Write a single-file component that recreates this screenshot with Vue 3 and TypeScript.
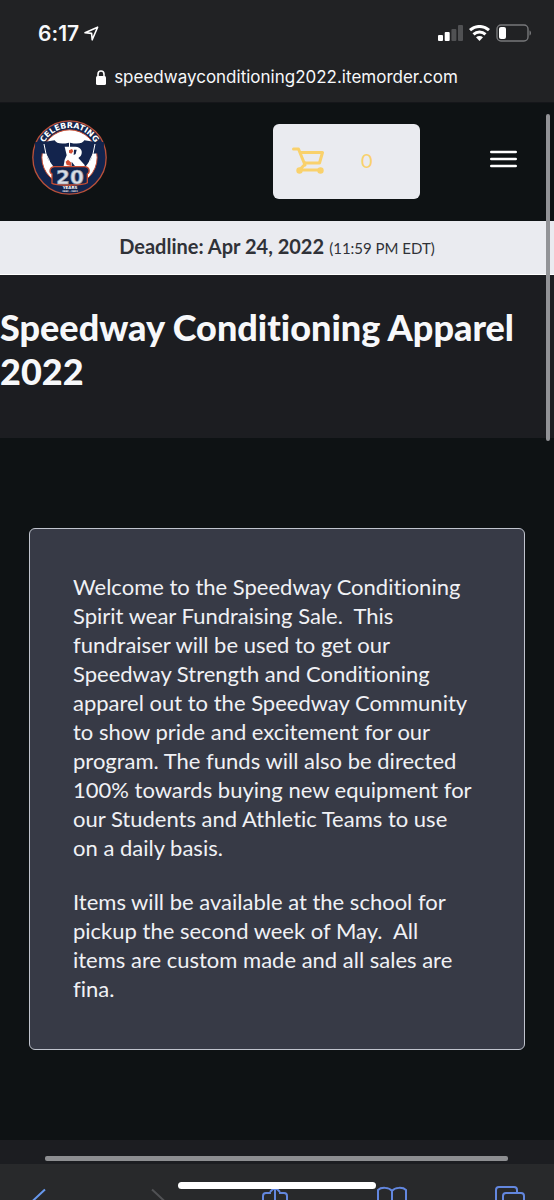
<script setup lang="ts">
import { ref } from 'vue'

const host = 'speedwayconditioning2022.itemorder.com'
const cartCount = ref<number>(0)
const welcome: string[] = [
  'Welcome to the Speedway Conditioning Spirit wear Fundraising Sale. \u00a0This fundraiser will be used to get our Speedway Strength and Conditioning apparel out to the Speedway Community to show pride and excitement for our program. The funds will also be directed 100% towards buying new equipment for our Students and Athletic Teams to use on a daily basis.',
  'Items will be available at the school for pickup the second week of May. \u00a0All items are custom made and all sales are fina.',
]
</script>

<template>
  <div class="screen">
    <div class="browser-top">
      <div class="status">
        <span class="time">6:17</span>
        <svg class="location" width="15" height="15" viewBox="0 0 15 15" aria-hidden="true">
          <path d="M1 6.8 13.6 1.2 8.2 13.8 7.6 7.4Z" />
        </svg>
        <svg class="signal" width="26" height="16" viewBox="0 0 26 16" aria-hidden="true">
          <rect x="0" y="10" width="5" height="6" rx="1" fill="#fff" />
          <rect x="6.7" y="7" width="5" height="9" rx="1" fill="#fff" />
          <rect x="13.4" y="4" width="5" height="12" rx="1" fill="#505153" />
          <rect x="20" y="0" width="5" height="16" rx="1" fill="#505153" />
        </svg>
        <svg class="wifi" width="21" height="16" viewBox="0 0 21 16" aria-hidden="true">
          <g fill="none" stroke="#fff" stroke-width="3">
            <path d="M1 5.2C6.5 .2 14.5 .2 20 5.2" />
            <path d="M4.5 9.4C8 6.2 13 6.2 16.5 9.4" />
          </g>
          <path d="M7 12.3C9 10.5 12 10.5 14 12.3L10.5 16Z" fill="#fff" />
        </svg>
        <svg class="battery" width="36" height="18" viewBox="0 0 36 18" aria-hidden="true">
          <rect x="1" y="1" width="31" height="16" rx="4" fill="none" stroke="#77787a" stroke-width="1.4" />
          <rect x="3" y="3" width="7" height="12" rx="2" fill="#fff" />
          <path d="M33.5 6.5C35.5 7 35.5 11 33.5 11.5Z" fill="#77787a" />
        </svg>
      </div>
      <div class="address">
        <svg width="10" height="15" viewBox="0 0 10 15" aria-hidden="true">
          <rect x="0" y="6" width="10" height="9" rx="1.5" fill="#fff" />
          <path d="M2 7V4.2C2 0 8 0 8 4.2V7" fill="none" stroke="#fff" stroke-width="1.6" />
        </svg>
        <span>{{ host }}</span>
      </div>
    </div>

    <header class="site-header">
      <a href="#" class="logo" aria-label="Store home">
        <svg width="75" height="75" viewBox="0 0 225 225">
          <defs>
            <path id="ring" d="M26 96A88 88 0 0 1 199 96" />
          </defs>
          <circle cx="112.5" cy="112.5" r="110" fill="#13244d" stroke="#b8503a" stroke-width="4" />
          <circle cx="112.5" cy="112.5" r="83" fill="#fff" stroke="#c84d32" stroke-width="3" />
          <path d="M9 66 30 67 68 61C72 70 88 74 111 68V175H66V142L48 118L43 101 10 98Z" fill="#13244d" />
          <path d="M216 66 195 67 157 61C153 70 137 74 114 68V175H159V142L177 118L182 101 215 98Z" fill="#13244d" />
          <path d="M36 72 42 102 52 122 58 150" fill="none" stroke="#fff" stroke-width="3" />
          <path d="M189 72 183 102 173 122 167 150" fill="none" stroke="#fff" stroke-width="3" />
          <path d="M98 80H130C148 80 154 96 146 108L139 114 158 135V145H134L119 125V143H94L98 119 104 106Z" fill="#fff" />
          <path d="M111 91 120 87 124 94 118 101 111 98ZM101 125 108 119 118 128 118 138 104 135Z" fill="#d34e34" />
          <path d="M126 89H134L131 102 125 105Z" fill="#13244d" />
          <path d="M67 140H158C173 140 175 157 166 162V188C154 197 73 197 60 190V162C50 157 53 140 67 140Z" fill="#13244d" stroke="#c84d32" stroke-width="4" />
          <text class="logo-arc"><textPath href="#ring" startOffset="50%" text-anchor="middle">CELEBRATING</textPath></text>
          <text class="logo-number" x="114" y="191" text-anchor="middle">20</text>
          <text class="logo-years" x="114" y="207" text-anchor="middle">YEARS</text>
          <text class="logo-dates" x="114" y="217" text-anchor="middle">2002 - 2022</text>
        </svg>
      </a>
      <button type="button" class="cart" :aria-label="`Cart, ${cartCount} items`">
        <svg width="33" height="27" viewBox="0 0 33 27" aria-hidden="true">
          <g fill="none" stroke="#f9d16c" stroke-width="3" stroke-linecap="round" stroke-linejoin="round">
            <path d="M1.5 2H6.5L13 18" />
            <path d="M8.5 5.5H30.5L27.5 16H12.5" />
            <path d="M13 16C12 20 9 20 8 23H28" />
          </g>
          <circle cx="7.5" cy="23.5" r="3.2" fill="#f9d16c" />
          <circle cx="28.5" cy="23.5" r="3.2" fill="#f9d16c" />
        </svg>
        <span>{{ cartCount }}</span>
      </button>
      <button type="button" class="menu" aria-label="Open menu">
        <svg width="27" height="18" viewBox="0 0 27 18" aria-hidden="true">
          <path d="M1.3 2H25.7M1.3 9H25.7M1.3 16H25.7" stroke="#fff" stroke-width="2.6" stroke-linecap="round" />
        </svg>
      </button>
    </header>

    <p class="deadline"><strong>Deadline: Apr 24, 2022</strong> <small>(11:59 PM EDT)</small></p>

    <section class="hero">
      <h1>Speedway Conditioning Apparel 2022</h1>
    </section>

    <main class="content">
      <article class="card">
        <p v-for="text in welcome" :key="text">{{ text }}</p>
      </article>
    </main>

    <div class="next-section"></div>

    <nav class="toolbar" aria-label="Browser">
      <button type="button" aria-label="Back">
        <svg width="30" height="30" viewBox="0 0 30 30"><path d="M21 3.5 7 16.5 21 29" stroke="#6798ed" /></svg>
      </button>
      <button type="button" aria-label="Forward">
        <svg width="30" height="30" viewBox="0 0 30 30"><path d="M10 3.5 24 16.5 10 29" stroke="#505154" /></svg>
      </button>
      <button type="button" aria-label="Share">
        <svg width="30" height="30" viewBox="0 0 30 30"><path d="M11 7H6Q3 7 3 10V28H27V10Q27 7 24 7H19M15 19V1M10 6 15 1 20 6" stroke="#6387df" /></svg>
      </button>
      <button type="button" aria-label="Bookmarks">
        <svg width="30" height="30" viewBox="0 0 30 30"><path d="M15 27V5C12 1 4 1 1 4V25C5 23 12 23 15 27C18 23 26 23 29 25V4C26 1 18 1 15 5" stroke="#6387df" /></svg>
      </button>
      <button type="button" aria-label="Tabs">
        <svg width="30" height="30" viewBox="0 0 30 30"><path d="M8 22H4Q1 22 1 19V4Q1 1 4 1H19Q22 1 22 4V7M11 7H26Q29 7 29 10V28H8V10Q8 7 11 7Z" stroke="#6387df" /></svg>
      </button>
    </nav>

    <div class="scroll-vertical"></div>
    <div class="scroll-horizontal"></div>
    <div class="home-indicator"></div>
  </div>
</template>

<style>
body {
  margin: 0;
  background: #0e1214;
}
</style>

<style scoped>
.screen {
  position: relative;
  display: flex;
  flex-direction: column;
  min-height: 100vh;
  overflow: hidden;
  background: #0e1214;
  color: #f7f8fa;
  font-family: Lato, "Open Sans", sans-serif;
  font-variant-ligatures: none;
}

.screen * {
  box-sizing: border-box;
}

svg {
  display: block;
  flex: none;
}

button {
  padding: 0;
  border: 0;
  background: none;
  color: inherit;
  font: inherit;
  cursor: pointer;
}

.browser-top {
  height: 103px;
  background: #212224;
  border-bottom: 1px solid #15161a;
  font-family: Inter, Roboto, sans-serif;
}

.status {
  display: flex;
  align-items: center;
  height: 66px;
  padding: 0 22px 0 38px;
}

.time {
  font-size: 21px;
  font-weight: 600;
}

.location {
  margin-left: 5px;
  fill: none;
  stroke: #fff;
  stroke-width: 1.6;
  stroke-linejoin: round;
}

.signal {
  margin-left: auto;
}

.wifi {
  margin: 0 6px 0 5px;
}

.address {
  display: flex;
  align-items: center;
  justify-content: center;
  gap: 8px;
  height: 22px;
  font-size: 17px;
}

.site-header {
  display: flex;
  align-items: center;
  gap: 70px;
  height: 118px;
  padding: 0 37px 10px 32px;
}

.cart {
  display: flex;
  align-items: center;
  gap: 36px;
  width: 147px;
  height: 75px;
  margin: 8px 0 0 auto;
  padding: 0 19px 2px;
  border-radius: 6px;
  background: #eaebf0;
  color: #f9d16c;
  font-size: 20px;
}

.menu {
  padding-top: 4px;
}

.logo-arc,
.logo-number,
.logo-years,
.logo-dates {
  fill: #fff;
  font-family: "DejaVu Sans", sans-serif;
  font-weight: 700;
}

.logo-arc {
  font-size: 24px;
}

.logo-number {
  fill: #d9dde5;
  stroke: #8e98ac;
  stroke-width: 2px;
  font-size: 60px;
}

.logo-years {
  font-size: 12px;
}

.logo-dates {
  font-size: 7px;
}

.deadline {
  height: 54px;
  margin: 0;
  border-bottom: 1px solid #fff;
  background: #eaebf0;
  color: #303238;
  font-size: 20px;
  line-height: 51px;
  text-align: center;
}

.deadline small {
  font-size: 15px;
}

.hero {
  height: 163px;
  padding-top: 30px;
  background: #1c1d21;
}

h1 {
  margin: 0;
  font-size: 36px;
  font-weight: 900;
  line-height: 44px;
}

.content {
  padding: 90px 29px;
}

.card {
  padding: 43px 50px 46px 43px;
  border: 1px solid #c0c4ce;
  border-radius: 6px;
  background: #373a46;
  color: #f0f1f5;
  font-size: 22px;
  line-height: 29px;
}

.card p {
  margin: 0;
}

.card p + p {
  margin-top: 25px;
}

.next-section {
  flex: 1;
  min-height: 24px;
  background: #1c1d21;
}

.toolbar {
  display: flex;
  justify-content: space-between;
  align-items: flex-start;
  height: 36px;
  padding: 22px 29px 0 24px;
  overflow: hidden;
  background: #28292b;
}

.toolbar path {
  fill: none;
  stroke-width: 2;
}

.scroll-vertical {
  position: absolute;
  top: 114px;
  right: 4px;
  width: 4px;
  height: 327px;
  border-radius: 2px;
  background: #929397;
}

.scroll-horizontal {
  position: absolute;
  right: 46px;
  bottom: 39px;
  left: 45px;
  height: 5px;
  border-radius: 2px;
  background: #8d8e91;
}

.home-indicator {
  position: absolute;
  right: 178px;
  bottom: 11px;
  left: 178px;
  height: 7px;
  border-radius: 4px;
  background: #fff;
}
</style>
